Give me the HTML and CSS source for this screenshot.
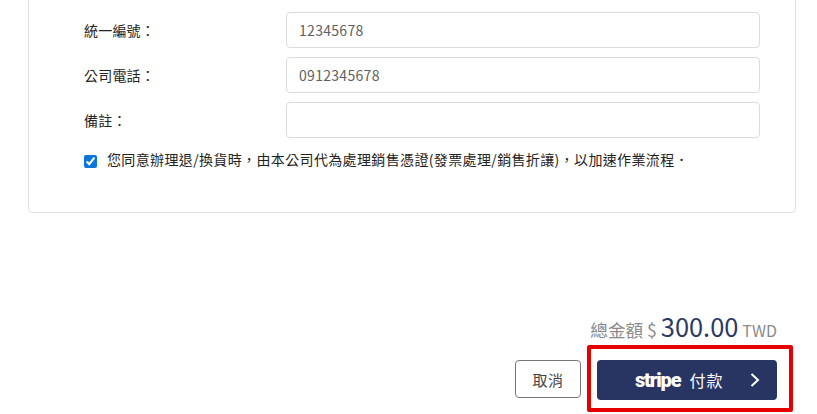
FILE: index.html
```html
<!DOCTYPE html>
<html lang="zh-Hant">
<head>
<meta charset="utf-8">
<title>付款</title>
<link rel="stylesheet" href="styles.css">
</head>
<body>
<div class="page">
  <form class="card">
    <div class="row">
      <label class="label">統一編號：</label>
      <input class="field" type="text" value="12345678">
    </div>
    <div class="row">
      <label class="label">公司電話：</label>
      <input class="field" type="text" value="0912345678">
    </div>
    <div class="row">
      <label class="label">備註：</label>
      <input class="field" type="text">
    </div>
    <label class="agree">
      <input class="check" type="checkbox" checked>
      <span>您同意辦理退/換貨時，由本公司代為處理銷售憑證(發票處理/銷售折讓)，以加速作業流程．</span>
    </label>
  </form>
  <div class="footer">
    <div class="total">
      <span class="total-label">總金額 $</span>
      <span class="amount">300.00</span>
      <span class="currency">TWD</span>
    </div>
    <div class="actions">
      <button class="cancel" type="button">取消</button>
      <div class="pay-wrap">
        <button class="pay" type="button">
          <span class="brand">stripe</span>
          <span class="pay-text">付款</span>
          <svg class="chevron" width="10" height="14" viewBox="0 0 10 14" aria-hidden="true"><path d="M1.5 1 L8 7 L1.5 13" fill="none" stroke="#fff" stroke-width="2"/></svg>
        </button>
        <div class="highlight"></div>
      </div>
    </div>
  </div>
</div>
</body>
</html>
```
FILE: styles.css
```css
* { box-sizing: border-box; }
html, body { margin: 0; padding: 0; background: #fff; }
body {
  width: 817px;
  height: 414px;
  overflow: hidden;
  font-family: "Noto Sans CJK TC", "Noto Sans", sans-serif;
  color: #222;
}
.page { padding: 0 21px 0 28px; }
.card {
  height: 213px;
  border: 1px solid #e0e0e0;
  border-top: 0;
  border-radius: 0 0 5px 5px;
  padding: 12px 35px 0 55px;
  display: flex;
  flex-direction: column;
  gap: 9px;
}
.row { display: flex; align-items: center; height: 36px; }
.label { width: 202px; font-size: 14px; letter-spacing: 0.2px; color: #222; }
.field {
  flex: 1;
  height: 36px;
  min-width: 0;
  border: 1px solid #dcdcdc;
  border-radius: 4px;
  padding: 0 12px;
  font: 14px "Noto Sans CJK TC", "Noto Sans", sans-serif;
  letter-spacing: 0.3px;
  color: #5f5f5f;
  background: #fff;
  outline: none;
}
.agree {
  display: flex;
  align-items: flex-start;
  gap: 10px;
  margin-top: 2px;
  font-size: 14px;
  letter-spacing: 0.36px;
  line-height: 20px;
  color: #222;
}
.check {
  width: 13px;
  height: 13px;
  margin: 6px 0 0;
  accent-color: #0b75d8;
  flex: none;
}
.footer {
  margin-top: 98px;
  margin-right: 19px;
  display: flex;
  flex-direction: column;
  align-items: flex-end;
}
.total {
  display: flex;
  align-items: baseline;
  gap: 4px;
  height: 49px;
  line-height: 30px;
  color: #8a8a8a;
}
.total-label { font-size: 17.6px; }
.amount { font-size: 25.4px; color: #2b3a67; }
.currency { font-size: 16px; }
.actions { display: flex; align-items: flex-start; gap: 16px; }
.cancel {
  width: 66px;
  height: 38px;
  border: 1px solid #777;
  border-radius: 4px;
  background: #fff;
  color: #444;
  font: 15px "Noto Sans CJK TC", sans-serif;
  letter-spacing: 0.5px;
}
.pay-wrap { position: relative; }
.pay {
  display: flex;
  align-items: center;
  width: 180px;
  height: 40px;
  padding: 0 17px 0 38px;
  border: 0;
  border-radius: 4px;
  background: #283462;
  color: #fff;
  font-family: "Noto Sans CJK TC", sans-serif;
}
.brand {
  font-family: "Roboto", sans-serif;
  font-size: 20px;
  font-weight: 900;
  letter-spacing: -1.15px;
  line-height: 1;
}
.pay-text { margin-left: 9px; font-size: 16px; letter-spacing: 1px; }
.chevron { margin-left: auto; }
.highlight {
  position: absolute;
  left: -10px;
  top: -15px;
  width: 206px;
  height: 67px;
  border: 4px solid #e60000;
  border-radius: 2px;
}
```
